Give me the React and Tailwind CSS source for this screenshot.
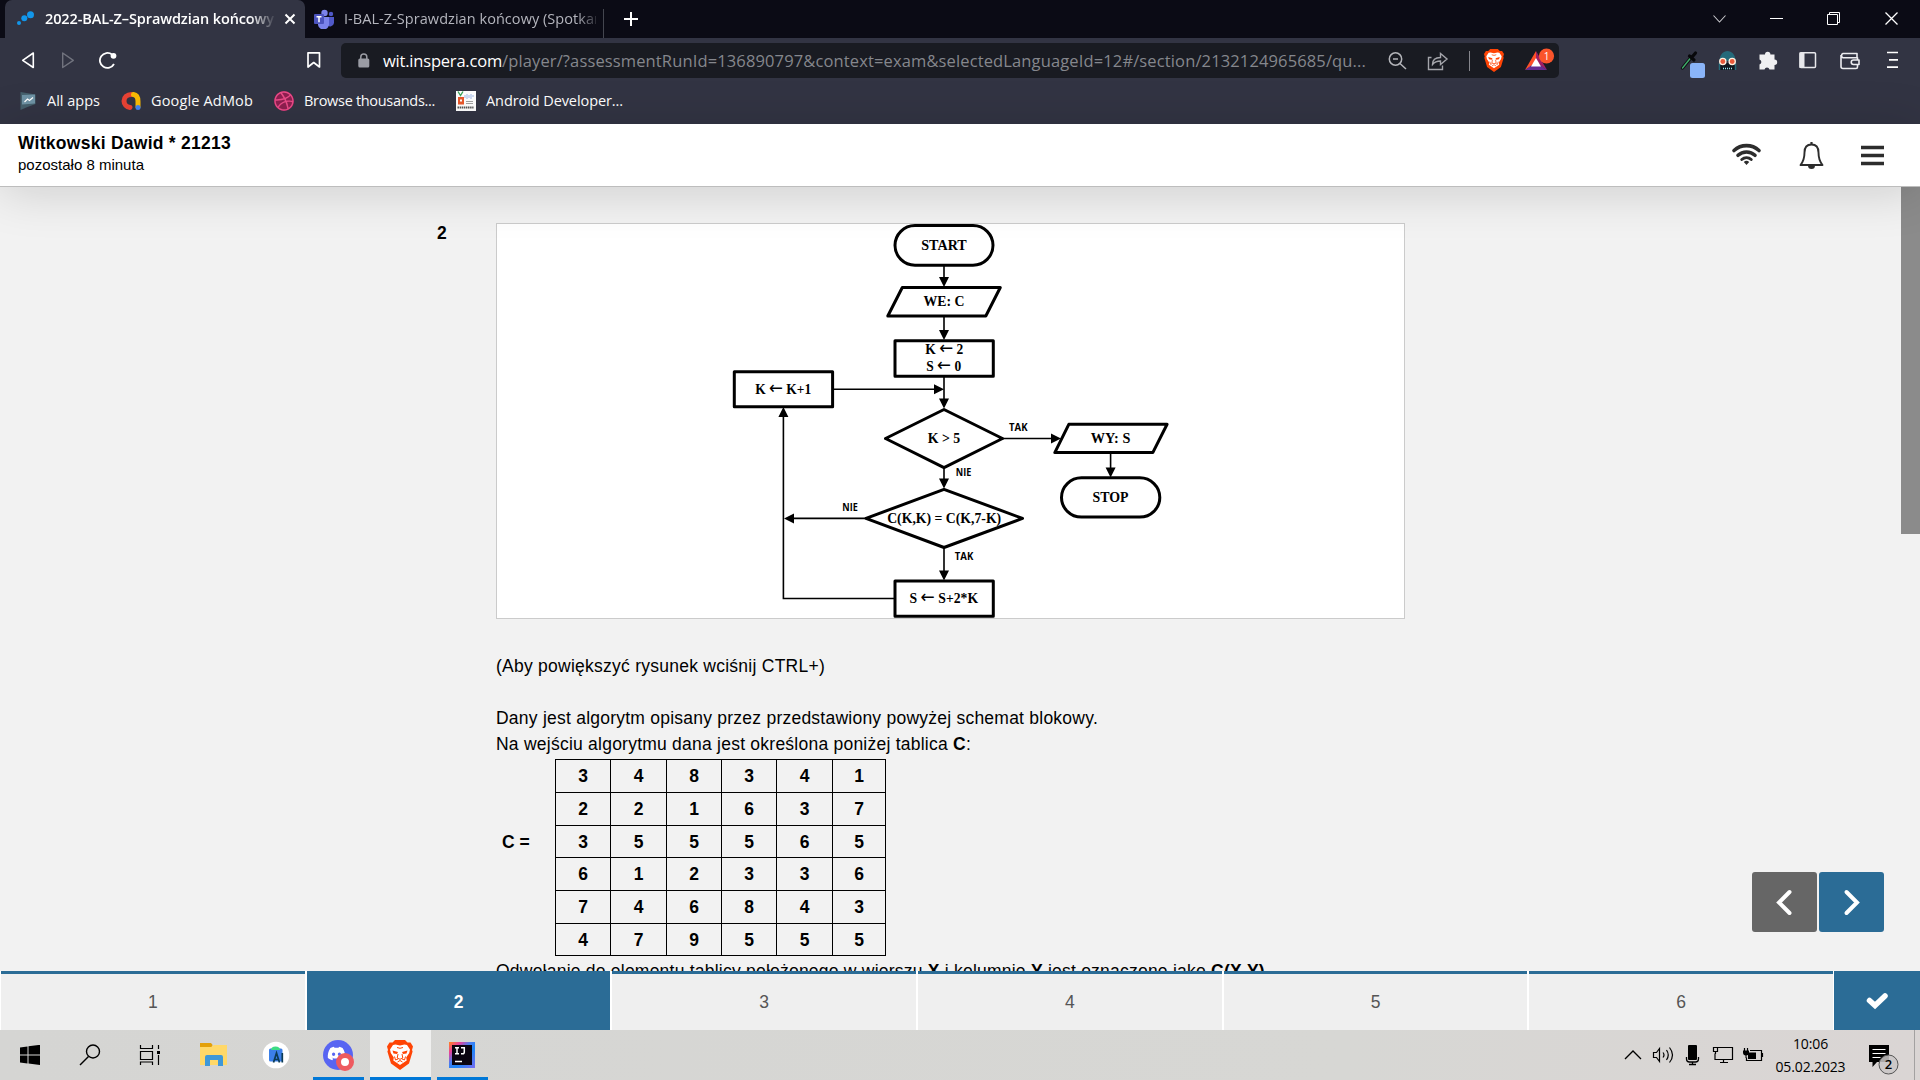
import React, { useLayoutEffect, useRef, useState } from "react";
import { FaDiscord, FaDribbble } from "react-icons/fa";

/* Single line of text whose tracking is adjusted to fill a given width. */
function Fit({ width, className = "", children }) {
  const ref = useRef(null);
  const [tracking, setTracking] = useState(0);
  useLayoutEffect(() => {
    const el = ref.current;
    const natural = el.getBoundingClientRect().width;
    setTracking((width - natural) / el.textContent.length);
  }, [width]);
  return (
    <span ref={ref} className={"inline-block shrink-0 whitespace-pre " + className} style={{ letterSpacing: tracking + "px" }}>
      {children}
    </span>
  );
}

/* Drawing with a view box of "x y width height" at one unit per pixel. */
function Glyph({ box, className = "", children }) {
  const [, , w, h] = box.split(" ");
  return (
    <svg viewBox={box} width={w} height={h} fill="none" className={"block shrink-0 " + className}>
      {children}
    </svg>
  );
}

function BraveLion({ className }) {
  return (
    <svg viewBox="0 0 26 30" preserveAspectRatio="none" fill="none" className={"block shrink-0 " + className}>
      <path d="M8 0h10l2.500 2.500h3L26 6.500l-1 3.500.6 1.500-3.600 12L13 30 4 23.500l-3.600-12L1 10 0 6.500l2.500-4h3z" fill="#ff4405" />
      <path d="M8.500 4.500L13 5.500l4.500-1L20 5l3 4.500-.8 3.500-3 4.500.5 3L13 25l-6.700-4.500.5-3-3-4.500L3 9.500 6 5z" fill="#fff" />
      <path d="M5.500 10.500l5.500 1.500-1 2-3.500-.5zM20.500 10.500L15 12l1 2 3.500-.5z" fill="#ff4405" />
      <path d="M11 14l-.8 4 2.800 1.300 2.800-1.300-.8-4M7.500 16.500l1 3.500 2.500-1M18.500 16.500l-1 3.500-2.500-1M10.500 22l2.500-1.500 2.500 1.500M10 7.500l3 .8 3-.8" stroke="#ff4405" strokeWidth="1" />
    </svg>
  );
}

function TabBar() {
  return (
    <div className="flex h-[38px] items-center bg-[#0b0b15] text-[14.5px] leading-[20px]">
      <div className="ml-[5px] flex h-full w-[300px] shrink-0 items-center rounded-t-[7px] bg-[#323443]">
        <Glyph box="17 10 18 18" className="ml-3">
          <g fill="#1296ea"><circle cx="19" cy="23" r="2" /><circle cx="24.3" cy="18.2" r="3" /><circle cx="30.5" cy="14.7" r="3.5" /></g>
        </Glyph>
        <div className="ml-[10px] w-[230px] overflow-hidden [mask-image:linear-gradient(to_right,black_205px,transparent_231px)]">
          <Fit width={229} className="font-semibold text-white">2022-BAL-Z–Sprawdzian końcowy</Fit>
        </div>
        <Glyph box="284 13 12 12" className="ml-[9px]">
          <path d="M285.5 14.5l9 9m0-9l-9 9" stroke="#fff" strokeWidth="2" />
        </Glyph>
      </div>
      <Glyph box="313 9 22 20" className="ml-2">
        <circle cx="324.5" cy="13" r="3.2" fill="#7b83eb" /><circle cx="331" cy="14" r="2.2" fill="#5059c9" />
        <path d="M327 17h7v6a4 4 0 01-7 2z" fill="#5059c9" />
        <path d="M318 17h11v6a5.5 5.5 0 01-11 2z" fill="#7b83eb" />
        <rect x="314" y="14" width="10" height="10" rx="1" fill="#4b53bc" />
        <path d="M316.5 16.7h5M319 16.7v5.5" stroke="#fff" strokeWidth="1.5" />
      </Glyph>
      <div className="ml-[9px] w-[252px] overflow-hidden [mask-image:linear-gradient(to_right,black_232px,transparent_258px)]">
        <Fit width={259} className="text-[#b4b5bd]">I-BAL-Z-Sprawdzian końcowy (Spotkan</Fit>
      </div>
      <div className="ml-[7px] mt-[9px] h-[29px] w-px bg-[#44464f]" />
      <Glyph box="623 11 16 16" className="ml-[19px]"><path d="M631 12v14M624 19h14" stroke="#fff" strokeWidth="2" /></Glyph>
      <Glyph box="1712 12 16 14" className="ml-auto"><path d="M1713.5 15.500l6 6.500 6-6.500" stroke="#c8c8cc" strokeWidth="1.100" /></Glyph>
      <Glyph box="1769 11 16 16" className="ml-[41px]"><path d="M1770 18.500h13" stroke="#fff" /></Glyph>
      <Glyph box="1826 11 16 16" className="ml-[41px]"><path d="M1827.500 14.500h10v10h-10zM1829.500 14v-1.500h10v10h-2" stroke="#fff" /></Glyph>
      <Glyph box="1884 11 16 16" className="ml-[42px] mr-[20px]"><path d="M1885.500 12.500l12 12m0-12l-12 12" stroke="#fff" strokeWidth="1.300" /></Glyph>
    </div>
  );
}

function AddressBar() {
  return (
    <div className="flex h-[35px] w-[1218px] shrink-0 items-center rounded-[5px] bg-[#191b22] text-[16.500px] leading-[24px] text-[#85878d]">
      <Glyph box="357 52 14 17" className="ml-[16px]">
        <rect x="358.300" y="58.500" width="11" height="9" rx="1.500" fill="#9a9ca4" />
        <path d="M360.800 59v-2a3 3 0 016 0v2" stroke="#9a9ca4" strokeWidth="1.500" />
      </Glyph>
      <Fit width={119} className="ml-[12px] text-white">wit.inspera.com</Fit>
      <Fit width={864}>/player/?assessmentRunId=136890797&context=exam&selectedLanguageId=12#/section/2132124965685/qu...</Fit>
      <Glyph box="1388 51 20 20" className="ml-[22px]">
        <g stroke="#b4b5ba" strokeWidth="1.500"><circle cx="1395.500" cy="59" r="6.200" /><path d="M1400 63.500l6 5.500M1393 59h5" /></g>
      </Glyph>
      <Glyph box="1427 51 22 20" className="ml-[19px]">
        <path d="M1431.500 57.500h-3v12h14v-4M1432.500 64.500c0-5 3-7 8-7v-4l6.500 5.500-6.500 5.500v-3.500c-4 0-6 1-8 3.500z" stroke="#a4a5ab" strokeWidth="1.400" />
      </Glyph>
      <div className="ml-[20px] h-5 w-px bg-[#85868c]" />
      <BraveLion className="ml-[14px] h-[23px] w-[20px]" />
      <Glyph box="1524 47 32 28" className="ml-[20px]">
        <path d="M1536 51l-11 19 11-7z" fill="#ff5028" /><path d="M1536 51l11 19-11-7z" fill="#9e1f63" /><path d="M1525 70h22l-11-8z" fill="#662d91" />
        <path d="M1536 58l-5 8.500h10z" fill="#fff" />
        <circle cx="1546.500" cy="56" r="7.600" fill="#fb542b" />
        <text x="1546.500" y="60" textAnchor="middle" className="fill-white font-['Open_Sans',sans-serif] text-[10px]">1</text>
      </Glyph>
    </div>
  );
}

function Toolbar() {
  return (
    <div className="flex h-[45px] items-center">
      <Glyph box="21 51 14 18" className="ml-[21px] -mt-px"><path d="M33.300 53v14.500L22.700 60.300z" stroke="#fff" strokeWidth="1.600" strokeLinejoin="round" /></Glyph>
      <Glyph box="61 51 14 18" className="ml-[26px] -mt-px"><path d="M62.700 53v14.500L73.300 60.300z" stroke="#71737e" strokeWidth="1.400" strokeLinejoin="round" /></Glyph>
      <Glyph box="98 51 20 18" className="ml-[23px] -mt-px">
        <path d="M114 64a7.500 7.500 0 11-2-9.500" stroke="#fff" strokeWidth="1.800" /><circle cx="113.500" cy="55.800" r="2.900" fill="#fff" />
      </Glyph>
      <Glyph box="306 51 15 18" className="ml-[188px] -mt-px"><path d="M308 52.800h11.500V67l-5.800-4.500L308 67z" stroke="#fff" strokeWidth="1.700" strokeLinejoin="round" /></Glyph>
      <div className="ml-[20px]"><AddressBar /></div>
      <Glyph box="1680 43 26 35" className="ml-[121px]">
        <path d="M1682.500 68l9-11" stroke="#101015" strokeWidth="3.500" strokeLinecap="round" /><path d="M1682.500 68l8-10" stroke="#3fae6a" strokeWidth="1.300" strokeLinecap="round" />
        <path d="M1689.500 56l4.500 4m-1.500-3.500l3-3.500" stroke="#08080b" strokeWidth="3.200" strokeLinecap="round" />
        <rect x="1690" y="63" width="15" height="15" rx="2.500" fill="#8ab4f8" />
      </Glyph>
      <Glyph box="1717 50 21 21" className="ml-[11px]">
        <path d="M1719.500 61c0-13.500 16-13.500 16 0z" fill="#246a7a" /><path d="M1720 63h15v7h-15z" fill="#101820" />
        <path d="M1719.500 63v7m16-7v7" stroke="#246a7a" strokeWidth="1.500" /><path d="M1723 68.500h9" stroke="#9be4ee" strokeWidth="1.500" strokeDasharray="1 1" />
        <circle cx="1722.800" cy="61.500" r="3.100" fill="#e9593a" stroke="#fff0df" strokeWidth="1.300" /><circle cx="1732.200" cy="61.500" r="3.100" fill="#e9593a" stroke="#fff0df" strokeWidth="1.300" />
      </Glyph>
      <Glyph box="1758 50 20 20" className="ml-[20px] -mt-px">
        <path d="M1765 54.500a2.700 2.700 0 015.400 0h4.100v5a2.700 2.700 0 010 5.400v4.600h-5a2.600 2.600 0 00-5 0h-5v-5a2.600 2.600 0 000-5v-5z" fill="#f0f0f2" />
      </Glyph>
      <Glyph box="1798 51 20 19" className="ml-[20px]"><rect x="1800" y="52.800" width="15.500" height="14.700" rx="1" stroke="#e8e8ec" strokeWidth="1.500" /><path d="M1799.500 52.500h5v15.500h-5z" fill="#e8e8ec" /></Glyph>
      <Glyph box="1839 51 22 20" className="ml-[21px]">
        <path d="M1857 57v-3.500h-14a2.300 2.300 0 000 4.300h14.500v2.200m0 4.500v2.500a1.500 1.500 0 01-1.500 1.500h-13a2 2 0 01-2-2V55M1859 60h-5.500a2.200 2.200 0 000 4.500h5.500z" stroke="#ececf0" strokeWidth="1.600" strokeLinejoin="round" />
      </Glyph>
      <Glyph box="1886 51 13 18" className="ml-[25px] -mt-px"><path d="M1887 52.500h11M1889 59.800h9M1887 67.200h11" stroke="#fff" strokeWidth="1.700" /></Glyph>
    </div>
  );
}

function Bookmarks() {
  return (
    <div className="flex h-[41px] items-start pt-[8px] text-[14.500px] leading-[20px] text-white">
      <Glyph box="19 91 18 20" className="ml-[19px]"><path d="M20.500 92l15 2.500v9.500l-8 3-7 3z" fill="#45606c" /><path d="M22 95l13-.5v9l-13 1z" fill="#6f93a5" /><path d="M24.500 102l3-3 2 1.500 3.500-3" stroke="#fff" strokeWidth="1.200" /></Glyph>
      <Fit width={53} className="ml-[10px]">All apps</Fit>
      <Glyph box="120 90 22 22" className="ml-[20px] -mt-px">
        <path d="M131.500 94.500c-4.500 0-7.500 3-7.500 6.500s2.500 6 6 6.500" stroke="#ea4335" strokeWidth="5" strokeLinecap="round" /><path d="M133.500 94.500c4 .5 4.500 4 4.500 7v5" stroke="#fbbc04" strokeWidth="5" strokeLinecap="round" /><circle cx="138" cy="107.500" r="2.500" fill="#4285f4" />
      </Glyph>
      <Fit width={102} className="ml-[9px]">Google AdMob</Fit>
      <span className="ml-[21px] h-5 w-5 shrink-0 rounded-full bg-[#8e1f50]"><FaDribbble className="h-5 w-5 text-[#ea4c89]" /></span>
      <Fit width={131} className="ml-[10px]">Browse thousands...</Fit>
      <Glyph box="456 91 20 20" className="ml-[21px]">
        <path d="M456 91h20v20h-20z" fill="#fff" /><path d="M458 91.500l2.500 4 2.500-4" stroke="#3ca55c" strokeWidth="1.400" />
        <rect x="458" y="97" width="6" height="7.500" fill="#e8582c" /><path d="M460 99.500h2v2h-2z" fill="#fff" />
        <path d="M465 95v3m2-4v5m2-4v3m2-4v5m2-4v2" stroke="#9fb9e8" /><path d="M466 101.500h7m-7 2h7" stroke="#8a8a8a" strokeWidth=".8" /><path d="M457.500 107.500h16" stroke="#555" strokeWidth="1.800" strokeDasharray="1.500 .6" />
      </Glyph>
      <Fit width={137} className="ml-[10px]">Android Developer...</Fit>
    </div>
  );
}

function ExamHeader() {
  return (
    <header className="relative z-10 flex h-[63px] items-start border-b border-[#bdbdbd] bg-white pl-[18px] text-black shadow-[0_4px_50px_rgba(0,0,0,0.16)]">
      <div className="flex flex-col pt-[8px]">
        <Fit width={213} className="self-start text-[17.500px] font-bold leading-[22px]">Witkowski Dawid * 21213</Fit>
        <Fit width={126} className="self-start text-[15px] leading-[22px]">pozostało 8 minuta</Fit>
      </div>
      <Glyph box="1731 141 32 26" className="ml-auto mt-[17px]">
        <g stroke="#2d2d2d" strokeWidth="3.600" strokeLinecap="round"><path d="M1734 150.500a18.500 18.500 0 0125 0" /><path d="M1738 155.300a12.500 12.500 0 0117 0" /><path d="M1741.800 159.500a7 7 0 019.400 0" strokeWidth="3" /></g>
        <path d="M1743.800 162a4 4 0 015.400 0l-2.700 3z" fill="#2d2d2d" />
      </Glyph>
      <Glyph box="1797 140 30 30" className="mt-[16px] ml-[34px]">
        <path d="M1811.500 144.500c-5 0-7 3.500-7 8 0 7-1.500 9.500-4 12.500h22c-2.500-3-4-5.500-4-12.500 0-4.500-2-8-7-8z" stroke="#2d2d2d" strokeWidth="1.900" strokeLinejoin="round" />
        <path d="M1811.500 142v3" stroke="#2d2d2d" strokeWidth="2.200" /><path d="M1808 165.500h7a3.500 3.500 0 01-7 0z" fill="#2d2d2d" />
      </Glyph>
      <Glyph box="1860 144 26 23" className="mt-[20px] ml-[33px] mr-[34px]"><path d="M1861 147.500h23M1861 155.500h23M1861 163.500h23" stroke="#2d2d2d" strokeWidth="3.600" /></Glyph>
    </header>
  );
}

const HEADS = {
  down: (x, y) => `M${x} ${y}l-5-10h10z`,
  up: (x, y) => `M${x} ${y}l-5 10h10z`,
  right: (x, y) => `M${x} ${y}l-10-5v10z`,
  left: (x, y) => `M${x} ${y}l10-5v10z`,
};
const ARROWS = [
  ["down", 944, 287], ["down", 944, 340], ["down", 944, 408.500], ["right", 944, 389.300], ["up", 783.400, 407],
  ["right", 1061, 438.500], ["down", 1110.600, 477.500], ["down", 944, 488.500], ["left", 784, 518.400], ["down", 944, 580.500],
];
const LABELS = [
  ["START", 944, 249.800, 45.500], ["WE: C", 944, 306, 41], ["K ← 2", 944.300, 354.300, 38], ["S ← 0", 943.700, 371.300, 35],
  ["K ← K+1", 783.200, 393.700, 56], ["K > 5", 944, 442.500, 32.500], ["WY: S", 1110.600, 442.500, 39.500], ["STOP", 1110.500, 501.700, 36],
  ["C(K,K) = C(K,7-K)", 944.200, 522.700, 114], ["S ← S+2*K", 943.800, 603, 68.500],
];
const BRANCHES = [["TAK", 1018.300, 431.300, 18.500], ["NIE", 963.500, 476.300, 15.500], ["NIE", 850, 510.700, 15.500], ["TAK", 964, 559.500, 18.500]];

/* Node caption; the assignment arrow is set lighter and larger than the letters. */
function NodeText({ text, x, y, width }) {
  const [left, right] = text.split("←");
  return (
    <text x={x - width / 2} y={y} textLength={width} lengthAdjust="spacingAndGlyphs">
      {left}
      {right && <tspan className="font-['DejaVu_Sans',sans-serif] text-[18px] font-normal">←</tspan>}
      {right}
    </text>
  );
}

function Flowchart() {
  return (
    <div className="h-[396px] w-[909px] border border-[#cbcbcb] bg-white">
      <Glyph box="497 224 907 394">
        <g stroke="#000" strokeWidth="1.600">
          <path d="M944 266v14M944 317v15M944 377v24M834 389.300h105M1003 438.500h50M1110.600 454v16M944 468v12M866 518.400h-75M944 548v25M895 598.500H783.400V414" />
        </g>
        <g stroke="#000" strokeWidth="3" strokeLinejoin="round">
          <rect x="895" y="225.500" width="98" height="39.700" rx="20" />
          <path d="M902.300 287.500h98l-14.500 28.500h-98z" />
          <path d="M895 340.800h98.300v35.400h-98.300zM734.300 371.700h98.300v35h-98.300zM895 581h98.300v35.300h-98.300z" />
          <path d="M944 409.500l58.500 29-58.500 29.100-58.500-29.100zM944 489.300l78.500 29.100-78.500 29.100-78-29.100z" />
          <path d="M1068.800 424.300h98.300l-14.300 28.300h-98z" />
          <rect x="1061.500" y="477.800" width="98.300" height="39.300" rx="20" />
        </g>
        <path d={ARROWS.map(([dir, x, y]) => HEADS[dir](x, y)).join("")} fill="#000" />
        <g className="fill-black font-['Liberation_Serif',serif] text-[14.500px] font-bold">
          {LABELS.map(([t, x, y, w]) => <NodeText key={t} text={t} x={x} y={y} width={w} />)}
        </g>
        <g className="fill-black font-['Open_Sans',sans-serif] text-[9.800px] font-bold">
          {BRANCHES.map(([t, x, y, w]) => (
            <text key={t + y} x={x - w / 2} y={y} textLength={w} lengthAdjust="spacingAndGlyphs">{t}</text>
          ))}
        </g>
      </Glyph>
    </div>
  );
}

const MATRIX = [
  [3, 4, 8, 3, 4, 1],
  [2, 2, 1, 6, 3, 7],
  [3, 5, 5, 5, 6, 5],
  [6, 1, 2, 3, 3, 6],
  [7, 4, 6, 8, 4, 3],
  [4, 7, 9, 5, 5, 5],
];

function Question() {
  return (
    <div className="flex pl-[437px] pt-[36px] text-[17.500px] leading-[26px] text-black">
      <div className="-mt-[3px] w-[59px] font-bold">2</div>
      <div className="flex flex-col items-start">
        <Flowchart />
        <Fit width={329} className="mt-[34px]">(Aby powiększyć rysunek wciśnij CTRL+)</Fit>
        <Fit width={602} className="mt-[26px]">Dany jest algorytm opisany przez przedstawiony powyżej schemat blokowy.</Fit>
        <Fit width={475}>Na wejściu algorytmu dana jest określona poniżej tablica <b>C</b>:</Fit>
        <div className="mt-[2px] flex items-start font-bold">
          <div className="w-[59px] pl-[6px] pt-[70px]">C =</div>
          <div className="grid grid-cols-[55px_56px_55px_55px_56px_53px] grid-rows-[33px_33px_32px_33px_33px_32px] border-l border-t border-black">
            {MATRIX.flat().map((n, i) => (
              <div key={i} className="flex items-center justify-center border-b border-r border-black">{n}</div>
            ))}
          </div>
        </div>
        <Fit width={774} className="mt-[2px]">Odwołanie do elementu tablicy położonego w wierszu <b>X</b> i kolumnie <b>Y</b> jest oznaczone jako <b>C(X,Y)</b>.</Fit>
      </div>
    </div>
  );
}

function PageNav() {
  return (
    <nav className="flex h-[59px] bg-white pl-px text-[17.500px]">
      <div className="grid w-[1832px] grid-cols-6 gap-x-[2px]">
        {[1, 2, 3, 4, 5, 6].map((n) => (
          <div key={n} className={n === 2
            ? "flex items-center justify-center border-t-[3px] border-[#2b6c96] bg-[#2b6c96] font-bold text-white"
            : "flex items-center justify-center border-t-[3px] border-[#2b6c96] bg-[#efefef] text-[#555]"}>{n}</div>
        ))}
      </div>
      <div className="ml-px flex flex-1 items-start bg-[#2b6c96] pl-[31px] pt-[19px]">
        <Glyph box="1865 990 24 21"><path d="M1869.500 1000.500l5.500 5 10-9.500" stroke="#fff" strokeWidth="5.500" strokeLinecap="round" /></Glyph>
      </div>
    </nav>
  );
}

function Taskbar() {
  return (
    <div className="flex h-[50px] items-center bg-[linear-gradient(to_right,#d5d5d3,#d7d7d4_70%,#dad5d4)] text-[14px] text-black">
      <Glyph box="20 1045 20 20" className="ml-[20px]"><path d="M20 1047.500l7.500-1v8H20zM28.500 1046.300l11.500-1.500v9.700h-11.500zM20 1055.500h7.500v8l-7.500-1zM28.500 1055.500H40v9.500l-11.500-1.500z" fill="#000" /></Glyph>
      <Glyph box="79 1044 22 22" className="ml-[39px]"><circle cx="93" cy="1051.500" r="6.500" stroke="#000" strokeWidth="1.400" /><path d="M88.500 1056.500l-8.500 8.500" stroke="#000" strokeWidth="1.500" /></Glyph>
      <Glyph box="139 1044 22 22" className="ml-[38px] -mt-px"><path d="M140.500 1045v3.500h12V1045M140.500 1051.500h12v8h-12zM140.500 1065v-3h12v3M158.500 1045v4M158.500 1055v10" stroke="#000" strokeWidth="1.200" /><path d="M157 1051h3v3h-3z" fill="#000" /></Glyph>
      <Glyph box="199 1042 30 26" className="ml-[38px] -mt-px">
        <path d="M200 1043h11l2 2.500h-1v4h-12z" fill="#e3a008" /><path d="M200 1047h11l3-2h13v20h-27z" fill="#ffd868" />
        <path d="M205 1066v-9a2 2 0 012-2h14a2 2 0 012 2v9h-5v-6h-8v6z" fill="#3f98d8" />
      </Glyph>
      <Glyph box="262 1041 28 28" className="ml-[33px]">
        <circle cx="276" cy="1055" r="13.300" fill="#fff" /><rect x="269" y="1048.500" width="13.500" height="13" rx="1.500" fill="#3b7fe8" /><path d="M271 1050a4.500 3.500 0 019 0z" fill="#3ddc84" />
        <path d="M273.500 1062.500l3-9.500 3 9.500m-5-3h4M282.300 1053v9.500" stroke="#0b3b52" strokeWidth="1.700" />
      </Glyph>
      <div className="ml-[23px] flex h-full w-[51px] items-center justify-center border-b-[3px] border-[#0078d7]">
        <span className="relative mt-[3px] -ml-px flex h-[30px] w-[30px] items-center justify-center rounded-full bg-[#5865f2]">
          <FaDiscord className="-ml-[3px] -mt-[4px] h-[19px] w-[19px] text-white" />
          <span className="absolute -bottom-px -right-[1px] h-[18px] w-[18px] rounded-full border-[5.500px] border-[#ee5a5f] bg-white" />
        </span>
      </div>
      <div className="ml-[6px] flex h-full w-[61px] items-center justify-center border-b-[3px] border-[#0078d7] bg-[#f0f0ef]">
        <BraveLion className="mt-[3px] -ml-px h-[30px] w-[26px]" />
      </div>
      <div className="ml-[6px] flex h-full w-[51px] items-center justify-center border-b-[3px] border-[#0078d7]">
        <span className="mt-[3px] -ml-px flex h-[26px] w-[26px] items-center justify-center bg-[linear-gradient(135deg,#fe7a30_4%,#e8409a_22%,#4a7df0_42%,#1a86f8_60%,#7a6cf0)]">
          <svg viewBox="0 0 20 20" width="20" height="20" fill="none"><path d="M0 0h20v20H0z" fill="#0a0410" /><path d="M3 2.800h4M3 8.700h4M5 2.800v6M9 2.800h3.300v4.500a1.500 1.500 0 01-1.500 1.500H9M3 16.500h7" stroke="#fff" strokeWidth="1.500" /></svg>
        </span>
      </div>
      <Glyph box="1624 1045 18 20" className="ml-auto"><path d="M1625 1059l8-8 8 8" stroke="#000" strokeWidth="1.300" /></Glyph>
      <Glyph box="1652 1045 22 20" className="ml-[10px]"><path d="M1653.500 1052.500h3l3-4v13l-3-4h-3zM1663 1052.500q2 2.500 0 5M1666.500 1050q3.500 5 0 10M1669.500 1047.500q6 7.500 0 15" stroke="#000" strokeWidth="1.200" /></Glyph>
      <Glyph box="1685 1044 15 22" className="ml-[11px]"><rect x="1688" y="1045" width="9" height="15" rx="1" fill="#000" /><path d="M1686.500 1057v2a3 3 0 003 3h6a3 3 0 003-3v-2M1692.500 1062v2.500M1689 1064.500h7" stroke="#000" strokeWidth="1.300" /></Glyph>
      <Glyph box="1712 1045 22 20" className="ml-[12px]"><path d="M1718 1047.500h14.500v12h-17.500v-6M1723.500 1060v2.500M1720 1062.500h8M1713.500 1047.500h4v4h-4zM1715.500 1051v3" stroke="#000" strokeWidth="1.200" /></Glyph>
      <Glyph box="1742 1045 22 20" className="ml-[8px]"><path d="M1750 1050.500h11.500v10h-15v-3M1744.500 1048v3M1747.500 1048v3M1762.500 1053v4" stroke="#000" strokeWidth="1.200" /><path d="M1743 1050.500h6v2a3 3 0 01-6 0zM1748 1052.500h8v6.500h-8z" fill="#000" /><path d="M1746 1055v3" stroke="#000" /></Glyph>
      <div className="ml-[11px] flex w-[71px] flex-col items-center leading-[23px]">
        <Fit width={35}>10:06</Fit>
        <Fit width={70}>05.02.2023</Fit>
      </div>
      <Glyph box="1868 1043 32 33" className="ml-[22px] mr-[14px] mt-[9px]">
        <path d="M1869 1045h20v17h-12l-4.500 5v-5h-3.500z" fill="#000" /><path d="M1872.500 1049.500h13M1872.500 1053.500h13M1872.500 1057.500h8" stroke="#fff" strokeWidth="1.200" />
        <circle cx="1888.500" cy="1064.500" r="9.500" fill="#c9c6c5" fillOpacity=".85" stroke="#555" strokeWidth="1" />
        <text x="1888.500" y="1069.300" textAnchor="middle" className="fill-black font-['Open_Sans',sans-serif] text-[13px] font-semibold">2</text>
      </Glyph>
      <div className="mr-[5px] h-full w-px bg-[#a3a1a1]" />
    </div>
  );
}

export default function App() {
  return (
    <div className="flex h-[1080px] w-[1920px] flex-col overflow-hidden bg-[#f2f2f2] font-['Open_Sans','Noto_Sans',sans-serif]">
      <div className="flex h-[124px] shrink-0 flex-col bg-[#323443]">
        <TabBar />
        <Toolbar />
        <Bookmarks />
      </div>
      <div className="relative flex h-[906px] shrink-0 flex-col font-['Liberation_Sans',Arial,sans-serif]">
        <ExamHeader />
        <main className="flex h-[784px] items-start justify-between overflow-hidden">
          <Question />
          <div className="h-[347px] w-[19px] bg-[#8b8b8b]" />
        </main>
        <PageNav />
        <div className="absolute bottom-[98px] right-[36px] flex gap-[2px]">
          <div className="flex h-[60px] w-[65px] items-center justify-center rounded-[3px] bg-[#666]">
            <Glyph box="1775 888 20 28"><path d="M1789.500 892l-10.500 10.500 10.500 10.500" stroke="#fff" strokeWidth="4" strokeLinecap="round" /></Glyph>
          </div>
          <div className="flex h-[60px] w-[65px] items-center justify-center rounded-[3px] bg-[#2b6c96]">
            <Glyph box="1842 888 20 28"><path d="M1846.500 892l10.500 10.500-10.500 10.500" stroke="#fff" strokeWidth="4" strokeLinecap="round" /></Glyph>
          </div>
        </div>
      </div>
      <Taskbar />
    </div>
  );
}
